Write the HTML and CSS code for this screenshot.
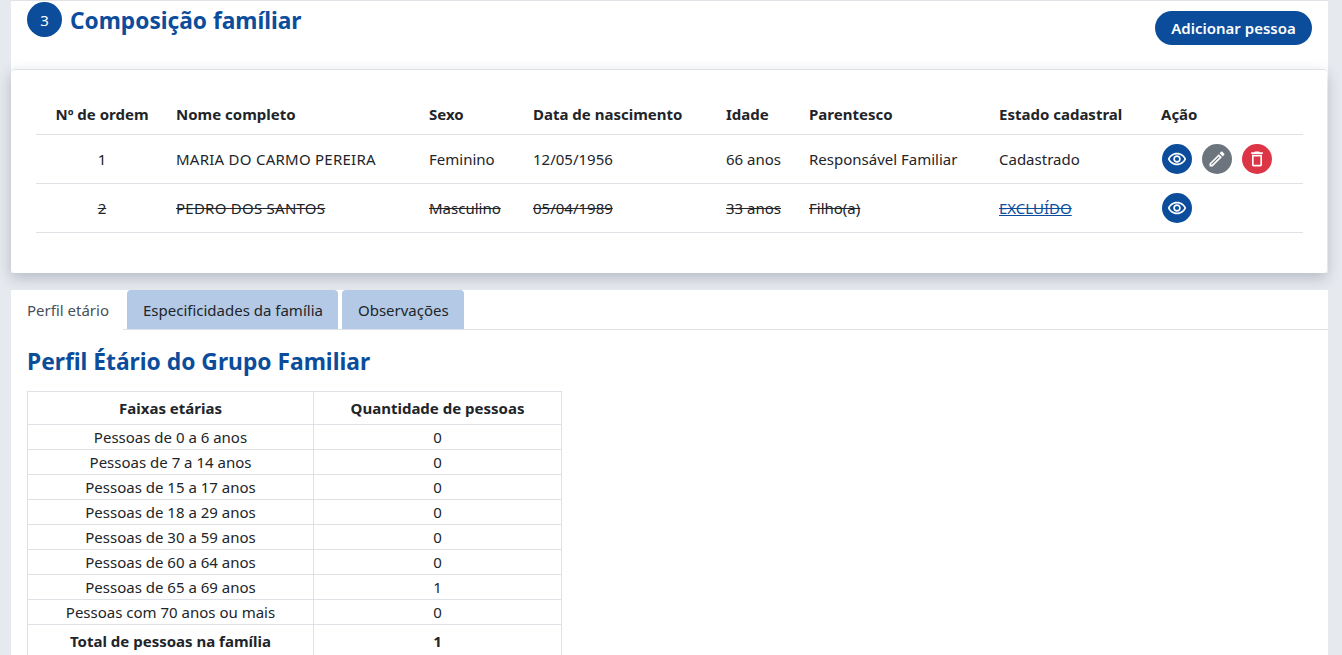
FILE: index.html
```html
<!DOCTYPE html>
<html lang="pt-BR">
  <head>
    <meta charset="UTF-8" />
    <title>Composição famíliar</title>
    <link rel="stylesheet" href="styles.css">
  </head>
  <body>
    <main class="page">
      <section class="card">
        <header class="card-head">
          <div class="card-title">
            <span class="step">3</span>
            <h2>Composição famíliar</h2>
          </div>
          <button class="btn-add" type="button">Adicionar pessoa</button>
        </header>
        <div class="card-body">
          <table class="people">
            <colgroup>
              <col class="c-order"><col class="c-name"><col class="c-sex"><col class="c-birth">
              <col class="c-age"><col class="c-kin"><col class="c-state"><col class="c-action">
            </colgroup>
            <thead>
              <tr>
                <th class="center">Nº de ordem</th>
                <th>Nome completo</th>
                <th>Sexo</th>
                <th>Data de nascimento</th>
                <th>Idade</th>
                <th>Parentesco</th>
                <th>Estado cadastral</th>
                <th>Ação</th>
              </tr>
            </thead>
            <tbody>
              <tr>
                <td class="center">1</td>
                <td class="name">MARIA DO CARMO PEREIRA</td>
                <td>Feminino</td>
                <td>12/05/1956</td>
                <td>66 anos</td>
                <td>Responsável Familiar</td>
                <td>Cadastrado</td>
                <td>
                  <div class="actions">
                    <button class="icon-btn blue" type="button" aria-label="Ver">
                      <svg viewBox="0 0 24 24"><path d="M12 6.5a9.77 9.77 0 0 1 8.82 5.5c-1.65 3.37-5.02 5.5-8.82 5.5S4.83 15.37 3.18 12A9.77 9.77 0 0 1 12 6.5m0-2C7 4.5 2.73 7.61 1 12c1.73 4.39 6 7.5 11 7.5s9.27-3.11 11-7.5c-1.73-4.39-6-7.5-11-7.5zm0 5a2.5 2.5 0 0 1 0 5 2.5 2.5 0 0 1 0-5m0-2c-2.48 0-4.5 2.02-4.5 4.5s2.02 4.5 4.5 4.5 4.5-2.02 4.5-4.5-2.02-4.5-4.5-4.5z"/></svg>
                    </button>
                    <button class="icon-btn gray" type="button" aria-label="Editar">
                      <svg viewBox="0 0 24 24"><path d="M14.06 9.02l.92.92L5.92 19H5v-.92l9.06-9.06M17.66 3c-.25 0-.51.1-.7.29l-1.83 1.83 3.75 3.75 1.83-1.83c.39-.39.39-1.02 0-1.41l-2.34-2.34c-.2-.2-.45-.29-.71-.29zm-3.6 3.19L3 17.25V21h3.75L17.81 9.94l-3.75-3.75z"/></svg>
                    </button>
                    <button class="icon-btn red" type="button" aria-label="Excluir">
                      <svg viewBox="0 0 24 24"><path d="M16 9v10H8V9h8m-1.5-6h-5l-1 1H5v2h14V4h-3.5l-1-1zM18 7H6v12c0 1.1.9 2 2 2h8c1.1 0 2-.9 2-2V7z"/></svg>
                    </button>
                  </div>
                </td>
              </tr>
              <tr class="removed">
                <td class="center"><s>2</s></td>
                <td class="name"><s>PEDRO DOS SANTOS</s></td>
                <td><s>Masculino</s></td>
                <td><s>05/04/1989</s></td>
                <td><s>33 anos</s></td>
                <td><s>Filho(a)</s></td>
                <td><a class="state-link" href="#">EXCLUÍDO</a></td>
                <td>
                  <div class="actions">
                    <button class="icon-btn blue" type="button" aria-label="Ver">
                      <svg viewBox="0 0 24 24"><path d="M12 6.5a9.77 9.77 0 0 1 8.82 5.5c-1.65 3.37-5.02 5.5-8.82 5.5S4.83 15.37 3.18 12A9.77 9.77 0 0 1 12 6.5m0-2C7 4.5 2.73 7.61 1 12c1.73 4.39 6 7.5 11 7.5s9.27-3.11 11-7.5c-1.73-4.39-6-7.5-11-7.5zm0 5a2.5 2.5 0 0 1 0 5 2.5 2.5 0 0 1 0-5m0-2c-2.48 0-4.5 2.02-4.5 4.5s2.02 4.5 4.5 4.5 4.5-2.02 4.5-4.5-2.02-4.5-4.5-4.5z"/></svg>
                    </button>
                  </div>
                </td>
              </tr>
            </tbody>
          </table>
        </div>
      </section>

      <section class="panel">
        <nav class="tabs">
          <a class="tab active" href="#">Perfil etário</a>
          <a class="tab" href="#">Especificidades da família</a>
          <a class="tab" href="#">Observações</a>
        </nav>
        <div class="tab-content">
          <h3>Perfil Étário do Grupo Familiar</h3>
          <table class="ages">
            <colgroup><col class="c-range"><col class="c-count"></colgroup>
            <thead>
              <tr><th>Faixas etárias</th><th>Quantidade de pessoas</th></tr>
            </thead>
            <tbody>
              <tr><td>Pessoas de 0 a 6 anos</td><td>0</td></tr>
              <tr><td>Pessoas de 7 a 14 anos</td><td>0</td></tr>
              <tr><td>Pessoas de 15 a 17 anos</td><td>0</td></tr>
              <tr><td>Pessoas de 18 a 29 anos</td><td>0</td></tr>
              <tr><td>Pessoas de 30 a 59 anos</td><td>0</td></tr>
              <tr><td>Pessoas de 60 a 64 anos</td><td>0</td></tr>
              <tr><td>Pessoas de 65 a 69 anos</td><td>1</td></tr>
              <tr><td>Pessoas com 70 anos ou mais</td><td>0</td></tr>
              <tr class="total"><th>Total de pessoas na família</th><th>1</th></tr>
            </tbody>
          </table>
        </div>
      </section>
    </main>
  </body>
</html>
```

FILE: styles.css
```css
:root {
  --color-blue: #0b4d9b;
  --color-text: #212529;
  --color-line: #dee2e6;
  --color-tab: #b3c9e5;
  --font-family: "Noto Sans", "Open Sans", sans-serif;
}

* {
  box-sizing: border-box;
  margin: 0;
  padding: 0;
}

html,
body {
  height: 100%;
  overflow: hidden;
}

body {
  background-color: #e6e9ee;
  color: var(--color-text);
  font-family: var(--font-family);
  font-size: 15px;
}

.page {
  display: flex;
  flex-direction: column;
  row-gap: 17px;
  padding: 0 14px 0 11px;
}

.card {
  background-color: #fff;
  border-top: 1px solid #dfe2e6;
}

.card-head {
  align-items: flex-start;
  display: flex;
  height: 68px;
  justify-content: space-between;
  padding: 1px 16px 0;
}

.card-title {
  align-items: flex-start;
  column-gap: 8px;
  display: flex;
}

.card-title h2 {
  color: var(--color-blue);
  font-size: 22.7px;
  font-weight: 700;
  line-height: 37px;
}

.step {
  align-items: center;
  background-color: var(--color-blue);
  border-radius: 50%;
  color: #fff;
  display: flex;
  height: 35px;
  justify-content: center;
  width: 35px;
}

.btn-add {
  background-color: var(--color-blue);
  border: 0;
  border-radius: 17px;
  color: #fff;
  font-family: var(--font-family);
  font-size: 15px;
  font-weight: 600;
  height: 34px;
  margin-top: 9px;
  width: 157px;
}

.card-body {
  border-radius: 4px;
  border-top: 1px solid var(--color-line);
  box-shadow: 0 5px 14px rgb(60 70 90 / 28%);
  height: 204px;
  margin-right: 1px;
  padding: 25px 25px 0;
}

.people {
  border-collapse: collapse;
  table-layout: fixed;
  width: 1267px;
}

.c-order { width: 132px; }
.c-name { width: 253px; }
.c-sex { width: 104px; }
.c-birth { width: 193px; }
.c-age { width: 83px; }
.c-kin { width: 190px; }
.c-state { width: 162px; }
.c-action { width: 150px; }

.people th,
.people td {
  border-bottom: 1px solid var(--color-line);
  padding: 0 8px;
  text-align: left;
  white-space: nowrap;
}

.people th {
  font-weight: 700;
  height: 39px;
}

.people td {
  height: 49px;
}

.people .center {
  text-align: center;
}

.people .name {
  letter-spacing: 0.25px;
}

.state-link {
  color: var(--color-blue);
  text-decoration: underline line-through;
}

.actions {
  column-gap: 10px;
  display: flex;
  padding-left: 1px;
}

.icon-btn {
  align-items: center;
  border: 0;
  border-radius: 50%;
  display: flex;
  height: 30px;
  justify-content: center;
  width: 30px;
}

.icon-btn svg {
  fill: #fff;
  height: 20px;
  width: 20px;
}

.blue { background-color: var(--color-blue); }
.gray { background-color: #6c757d; }
.red { background-color: #dc3545; }

.panel {
  background-color: #fff;
  height: 400px;
}

.tabs {
  border-bottom: 1px solid var(--color-line);
  column-gap: 4px;
  display: flex;
  height: 40px;
}

.tab {
  align-items: center;
  background-color: var(--color-tab);
  border-radius: 4px 4px 0 0;
  color: var(--color-text);
  display: flex;
  height: 39px;
  padding: 0 15px 0 16px;
  text-decoration: none;
}

.tab.active {
  background-color: #fff;
  color: #495057;
  height: 40px;
  padding-right: 14px;
}

.tab-content {
  padding: 15px 16px;
}

.tab-content h3 {
  color: var(--color-blue);
  font-size: 22.8px;
  font-weight: 700;
  line-height: 33px;
  margin-bottom: 13px;
}

.ages {
  border-collapse: collapse;
  table-layout: fixed;
  width: 534px;
}

.c-range { width: 286px; }
.c-count { width: 248px; }

.ages th,
.ages td {
  border: 1px solid var(--color-line);
  text-align: center;
}

.ages th {
  font-weight: 700;
  height: 33px;
}

.ages td {
  height: 25px;
}
```
